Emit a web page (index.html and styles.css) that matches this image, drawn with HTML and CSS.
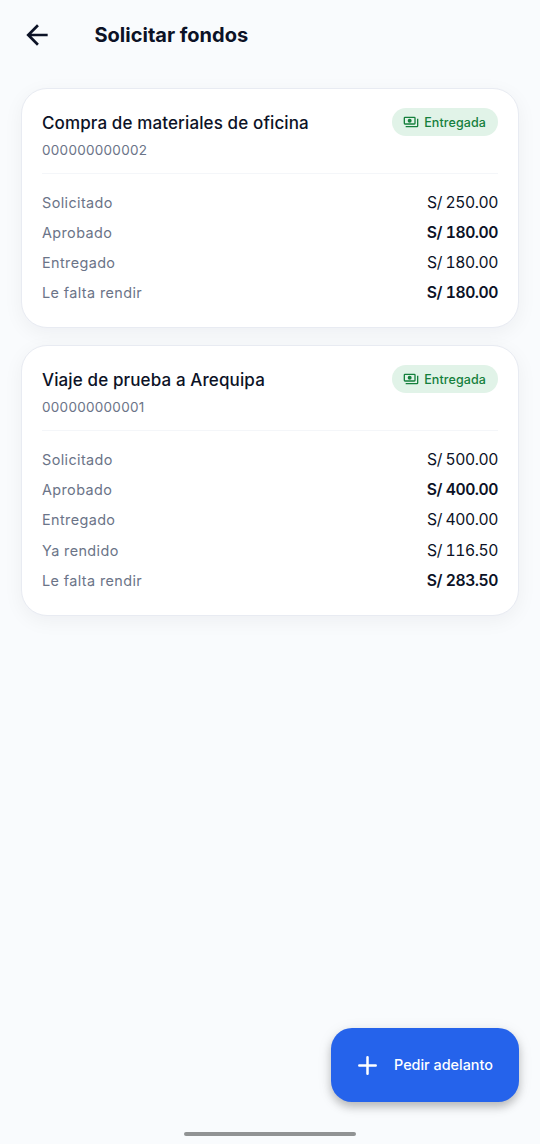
FILE: index.html
```html
<!DOCTYPE html>
<html lang="es">
<head>
<meta charset="utf-8">
<title>Solicitar fondos</title>
<link rel="stylesheet" href="styles.css">
</head>
<body>
<div class="screen">
  <header class="topbar">
    <svg class="back" viewBox="0 0 24 24"><path d="M20 11H7.83l5.59-5.59L12 4l-8 8 8 8 1.41-1.41L7.83 13H20z"/></svg>
    <h1 class="title">Solicitar fondos</h1>
  </header>
  <main class="list">
    <article class="card">
      <div class="head">
        <h2 class="name">Compra de materiales de oficina</h2>
        <span class="badge"><svg class="cash" viewBox="0 0 24 24"><path fill-rule="evenodd" d="M3 4h14a2 2 0 0 1 2 2v8a2 2 0 0 1-2 2H3a2 2 0 0 1-2-2V6a2 2 0 0 1 2-2zm0 2v8h14V6zM10 7a3 3 0 1 1 0 6 3 3 0 0 1 0-6zM21 7h2v11a2 2 0 0 1-2 2H4v-2h17z"/></svg>Entregada</span>
      </div>
      <p class="code">000000000002</p>
      <dl class="rows">
        <div class="row"><dt>Solicitado</dt><dd>S/ 250.00</dd></div>
        <div class="row"><dt>Aprobado</dt><dd class="strong">S/ 180.00</dd></div>
        <div class="row"><dt>Entregado</dt><dd>S/ 180.00</dd></div>
        <div class="row"><dt>Le falta rendir</dt><dd class="strong">S/ 180.00</dd></div>
      </dl>
    </article>
    <article class="card">
      <div class="head">
        <h2 class="name">Viaje de prueba a Arequipa</h2>
        <span class="badge"><svg class="cash" viewBox="0 0 24 24"><path fill-rule="evenodd" d="M3 4h14a2 2 0 0 1 2 2v8a2 2 0 0 1-2 2H3a2 2 0 0 1-2-2V6a2 2 0 0 1 2-2zm0 2v8h14V6zM10 7a3 3 0 1 1 0 6 3 3 0 0 1 0-6zM21 7h2v11a2 2 0 0 1-2 2H4v-2h17z"/></svg>Entregada</span>
      </div>
      <p class="code">000000000001</p>
      <dl class="rows">
        <div class="row"><dt>Solicitado</dt><dd>S/ 500.00</dd></div>
        <div class="row"><dt>Aprobado</dt><dd class="strong">S/ 400.00</dd></div>
        <div class="row"><dt>Entregado</dt><dd>S/ 400.00</dd></div>
        <div class="row"><dt>Ya rendido</dt><dd>S/ 116.50</dd></div>
        <div class="row"><dt>Le falta rendir</dt><dd class="strong">S/ 283.50</dd></div>
      </dl>
    </article>
  </main>
  <footer class="bottom">
    <button class="fab" type="button"><svg class="plus" viewBox="0 0 19 19"><path d="M9.5 1.3v16.4M1.3 9.5h16.4"/></svg><span class="fab-label">Pedir adelanto</span></button>
    <div class="handle"></div>
  </footer>
</div>
</body>
</html>
```
FILE: styles.css
```css
* { box-sizing: border-box; margin: 0; padding: 0; }
body { background: #f9fbfd; font-family: Inter, Roboto, sans-serif; color: #0c1226; }
.screen { height: 1144px; display: flex; flex-direction: column; overflow: hidden; }
.topbar { height: 70px; flex: none; display: flex; align-items: center; padding-left: 20.5px; }
.back { width: 32px; height: 32px; fill: #0c1226; }
.title { margin-left: 42px; font-size: 20px; line-height: 26px; font-weight: 700; }
.list { flex: 1; display: flex; flex-direction: column; gap: 16.5px; padding: 17.5px 21px 0; }
.card { background: #fff; border: 1px solid #e8ebf2; border-radius: 26px; padding: 20px; height: 240.7px; box-shadow: 0 5px 20px rgba(15, 23, 42, .05); }
.card + .card { height: 271px; }
.head { display: flex; justify-content: space-between; align-items: center; height: 27.5px; }
.name { font-size: 17px; font-weight: 500; line-height: 24px; padding-top: 1px; letter-spacing: .12px; white-space: nowrap; }
.badge { display: flex; align-items: center; height: 28px; padding: 0 12px 0 11.5px; gap: 5px; border-radius: 14px; background: #e1f3e8; color: #15803d; font-size: 12.5px; font-weight: 500; letter-spacing: .1px; }
.cash { width: 16px; height: 16px; fill: currentColor; }
.code { margin-top: 4px; height: 20px; font-size: 13.5px; line-height: 20px; letter-spacing: .28px; color: #6b7488; }
.rows { margin-top: 13px; border-top: 1px solid #f4f6f9; padding-top: 13.2px; }
.row { display: flex; justify-content: space-between; align-items: center; height: 30.2px; }
dt { font-size: 14.4px; letter-spacing: .4px; color: #6b7488; }
dd { font-size: 15.7px; font-variant-numeric: tabular-nums; letter-spacing: -.45px; }
.strong { font-weight: 600; }
.bottom { display: flex; flex-direction: column; padding: 0 21px; }
.fab { align-self: flex-end; width: 188px; height: 74px; display: flex; align-items: center; padding: 0 0 0 27px; gap: 17px; border: 0; border-radius: 21px; background: #2563eb; color: #fff; font: 500 14.4px Inter, Roboto, sans-serif; white-space: nowrap; box-shadow: 0 5px 8px rgba(0, 0, 0, .22), 0 3px 16px rgba(0, 0, 0, .08); }
.fab-label { padding-bottom: 1px; }
.plus { width: 19px; height: 19px; fill: none; stroke: #fff; stroke-width: 2.5; stroke-linecap: round; }
.handle { align-self: center; width: 172px; height: 4px; margin: 29.7px 0 8px; border-radius: 2px; background: #919394; }
```
